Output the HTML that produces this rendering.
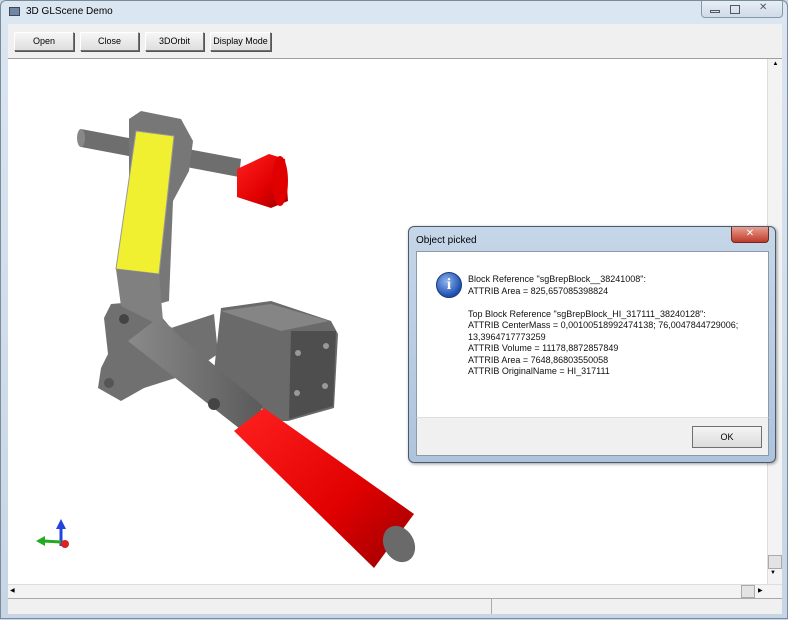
<!DOCTYPE html>
<html><head><meta charset="utf-8"><style>
*{margin:0;padding:0;box-sizing:border-box}
body{width:788px;height:619px;background:#c9d6e3;font-family:"Liberation Sans",sans-serif;font-size:9px;color:#000;position:relative;overflow:hidden}
.win{position:absolute;left:0;top:0;width:788px;height:619px;background:linear-gradient(#dbe6f1,#c7d5e4);border:1px solid #7b8b9c;border-radius:6px 6px 0 0}
.title{position:absolute;left:25px;top:5px;font-size:10px;color:#000}
.ticon{position:absolute;left:8px;top:6px;width:11px;height:9px;background:#6c8aa8;border:1px solid #445}
.tb{position:absolute;left:7px;top:23px;width:774px;height:35px;background:#f0f0f0;border-bottom:1px solid #a0a0a0}
.btn{position:absolute;top:8px;height:19px;background:linear-gradient(#f6f6f6,#dedede);border:1px solid #707070;border-top-color:#fff;border-left-color:#fff;box-shadow:1px 1px 0 #555;font-size:9px;text-align:center;line-height:17px}
.canvas{position:absolute;left:7px;top:58px;width:759px;height:525px;background:#fff}
.vs{position:absolute;left:766px;top:58px;width:15px;height:525px;background:#f3f3f3;border-left:1px solid #ddd}
.hs{position:absolute;left:7px;top:583px;width:774px;height:14px;background:#f3f3f3;border-top:1px solid #ddd}
.sb{position:absolute;left:7px;top:597px;width:774px;height:16px;background:#f0f0f0;border-top:1px solid #aaa}
.dlg{position:absolute;left:408px;top:226px;width:368px;height:237px;background:linear-gradient(#c5d6e8,#aec4dc);border:1px solid #4a5a6a;border-radius:6px;box-shadow:1px 1px 3px rgba(0,0,0,.4)}
.dlg .t{position:absolute;left:7px;top:8px;font-size:10px}
.x{position:absolute;left:322px;top:0px;width:38px;height:16px;background:linear-gradient(#e8a090,#c0392b);border:1px solid #6a2a20;border-top:none;border-radius:0 0 4px 4px;color:#fff;font-size:10px;text-align:center;line-height:14px}
.body{position:absolute;left:7px;top:24px;width:353px;height:166px;background:#fff;border:1px solid #8a9aaa;border-bottom:none}
.foot{position:absolute;left:7px;top:190px;width:353px;height:39px;background:#f0f0f0;border:1px solid #8a9aaa;border-top:1px solid #dfdfdf}
.ok{position:absolute;left:275px;top:8px;width:70px;height:22px;border:1px solid #707070;background:linear-gradient(#f4f4f4,#dcdcdc);text-align:center;line-height:20px;font-size:9px}
.txt{position:absolute;left:51px;top:22px;font-size:9px;line-height:11.5px;color:#111;white-space:pre}
.info{position:absolute;left:19px;top:20px;width:26px;height:26px;border-radius:50%;background:radial-gradient(circle at 40% 35%,#8fb4ee,#1d4fb0 70%);border:1px solid #1a3a80;color:#fff;font:bold 16px "Liberation Serif",serif;text-align:center;line-height:24px}
</style></head><body>
<div class="win">
<div class="ticon"></div><div class="title">3D GLScene Demo</div>
<div style="position:absolute;left:700px;top:0;width:82px;height:17px;border:1px solid #8899aa;border-top:none;border-radius:0 0 4px 4px;background:linear-gradient(#e8eef5,#cfdbe8)"></div>
<div style="position:absolute;left:709px;top:9px;width:10px;height:3px;border:1px solid #556"></div>
<div style="position:absolute;left:729px;top:4px;width:10px;height:9px;border:1px solid #556"></div>
<div style="position:absolute;left:758px;top:1px;font-size:10px;color:#556">✕</div>
<div class="tb">
<div class="btn" style="left:6px;width:60px">Open</div>
<div class="btn" style="left:72px;width:59px">Close</div>
<div class="btn" style="left:137px;width:59px">3DOrbit</div>
<div class="btn" style="left:202px;width:61px">Display Mode</div>
</div>
<div class="canvas"></div>
<svg style="position:absolute;left:0;top:0" width="788" height="619">
<defs>
<linearGradient id="r" x1="0" y1="0" x2="1" y2="1"><stop offset="0" stop-color="#ff2020"/><stop offset=".6" stop-color="#e00000"/><stop offset="1" stop-color="#900"/></linearGradient>
<linearGradient id="g" x1="0" y1="0" x2="1" y2="0"><stop offset="0" stop-color="#8a8a8a"/><stop offset="1" stop-color="#5a5a5a"/></linearGradient>
</defs>
<path d="M80 128 L240 158 L238 176 L80 146 Z" fill="#6e6e6e"/>
<ellipse cx="80" cy="137" rx="4" ry="9" fill="#888"/>
<path d="M236 168 L268 153 L284 158 L287 200 L270 207 L236 196 Z" fill="url(#r)"/>
<ellipse cx="279" cy="180" rx="8" ry="25" fill="#e00000"/>
<path d="M128 118 L140 110 L180 118 L192 140 L188 170 L172 200 L168 300 L150 305 L120 282 L128 190 Z" fill="#777"/>
<path d="M135 130 L173 135 L158 273 L115 268 Z" fill="#f0f030" stroke="#999" stroke-width="1"/>
<path d="M110 303 L147 300 L170 327 L213 313 L217 353 L187 373 L143 387 L120 400 L97 387 L100 367 L107 353 L103 317 Z" fill="#707070"/>
<path d="M115 268 L158 273 L162 320 L175 330 L150 320 L120 305 Z" fill="#808080"/>
<path d="M220 307 L270 300 L330 320 L337 333 L333 407 L287 420 L277 420 L213 370 Z" fill="#6a6a6a"/>
<path d="M220 310 L270 303 L328 320 L280 330 Z" fill="#858585"/>
<path d="M290 330 L335 330 L332 405 L288 418 Z" fill="#4e4e4e"/>
<circle cx="297" cy="352" r="3" fill="#999"/><circle cx="296" cy="392" r="3" fill="#999"/><circle cx="325" cy="345" r="3" fill="#999"/><circle cx="324" cy="385" r="3" fill="#999"/>
<path d="M127 340 L157 317 L262 405 L248 435 Z" fill="url(#g)"/>
<circle cx="123" cy="318" r="5" fill="#444"/><circle cx="213" cy="403" r="6" fill="#444"/><circle cx="108" cy="382" r="5" fill="#555"/>
<path d="M233 430 L263 407 L413 513 L373 567 Z" fill="url(#r)"/>
<ellipse cx="398" cy="543" rx="15" ry="19" fill="#6a6a6a" transform="rotate(-30 398 543)"/>
<path d="M60 545 L60 526" stroke="#2244dd" stroke-width="3"/><path d="M55 528 L60 518 L65 528 Z" fill="#2244dd"/>
<path d="M60 541 L42 540" stroke="#22aa22" stroke-width="3"/><path d="M44 535 L35 540 L44 545 Z" fill="#22aa22"/>
<circle cx="64" cy="543" r="4" fill="#dd2222"/>
</svg>
<div class="vs"><div style="position:absolute;left:2px;top:2px;width:11px;height:11px;font-size:6px;text-align:center">▲</div><div style="position:absolute;left:0;top:496px;width:14px;height:14px;background:#e3e3e3;border:1px solid #aaa"></div><div style="position:absolute;left:2px;top:511px;font-size:6px">▼</div></div>
<div class="hs"><div style="position:absolute;left:2px;top:2px;font-size:6px">◀</div><div style="position:absolute;left:733px;top:0;width:14px;height:13px;background:#e3e3e3;border:1px solid #aaa"></div><div style="position:absolute;left:750px;top:2px;font-size:6px">▶</div></div>
<div class="sb"><div style="position:absolute;left:483px;top:0;width:1px;height:15px;background:#aaa"></div></div>
</div>
<div class="dlg">
<div class="t">Object picked</div>
<div class="x">✕</div>
<div class="body">
<div class="info">i</div>
<div class="txt">Block Reference "sgBrepBlock__38241008":
ATTRIB Area = 825,657085398824

Top Block Reference "sgBrepBlock_HI_317111_38240128":
ATTRIB CenterMass = 0,00100518992474138; 76,0047844729006;
13,3964717773259
ATTRIB Volume = 11178,8872857849
ATTRIB Area = 7648,86803550058
ATTRIB OriginalName = HI_317111</div>
</div>
<div class="foot"><div class="ok">OK</div></div>
</div>
</body></html>
